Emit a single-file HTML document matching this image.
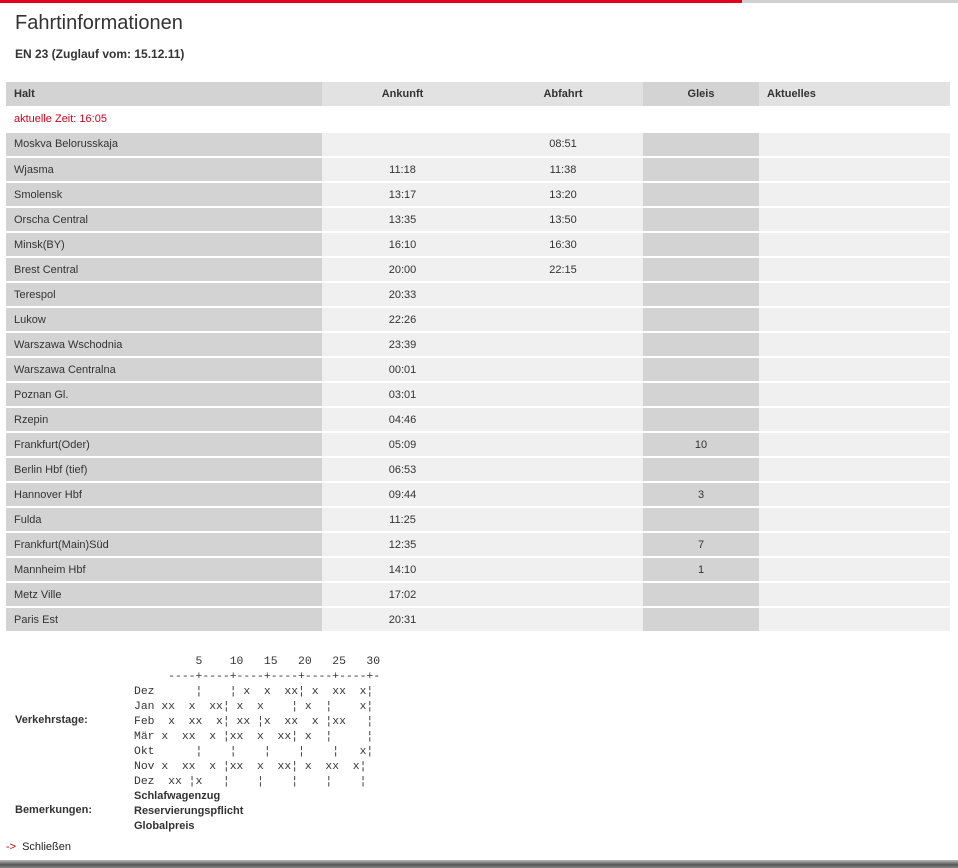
<!DOCTYPE html>
<html><head><meta charset="utf-8"><style>
*{margin:0;padding:0;box-sizing:border-box}
body{width:958px;height:868px;background:#fff;font-family:"Liberation Sans",Arial,sans-serif;color:#333;position:relative;overflow:hidden}
.topbar{position:absolute;left:0;top:0;width:958px;height:3px;background:#d0d0d0}
.topbar div{width:742px;height:3px;background:#e2001a}
h1{position:absolute;left:15px;top:12px;font-size:20px;font-weight:normal;color:#333}
h2{position:absolute;left:15px;top:47px;font-size:12px;font-weight:bold;color:#333}
table{position:absolute;left:6px;top:82px;border-collapse:collapse;font-size:11px;width:944px}
td,th{padding:0 8px;height:25px;border-bottom:2px solid #fff;white-space:nowrap}
th{height:24px;border:0;text-align:left;font-weight:bold}
.c1{width:316px;background:#d3d3d3}
.c2{width:161px;background:#f0f0f0;text-align:center}
.c3{width:160px;background:#f0f0f0;text-align:center}
.c4{width:116px;background:#d3d3d3;text-align:center}
.c5{width:191px;background:#f0f0f0}
th.c2,th.c3,th.c5{background:#e2e2e2}
th.c2,th.c3,th.c4{text-align:center}
tr.now td{background:#fff;color:#d0021b;height:26px;border-bottom:1px solid #fff}
.lbl{position:absolute;left:15px;font-size:11px;font-weight:bold;color:#333}
pre{position:absolute;left:134px;top:655px;font-family:"Liberation Mono","Courier New",monospace;font-size:11.4px;line-height:15px;color:#333}
.rem{position:absolute;left:134px;top:789px;font-size:11px;font-weight:bold;line-height:15px}
.close{position:absolute;left:6px;top:841px;font-size:11px;color:#222}
.close span{color:#c00;margin-right:6px}
.bot{position:absolute;left:0;top:860px;width:958px;height:8px;background:linear-gradient(#bbb,#555 60%,#888)}
</style></head><body>
<div class="topbar"><div></div></div>
<h1>Fahrtinformationen</h1>
<h2>EN 23 (Zuglauf vom: 15.12.11)</h2>
<table>
<tr><th class="c1">Halt</th><th class="c2">Ankunft</th><th class="c3">Abfahrt</th><th class="c4">Gleis</th><th class="c5">Aktuelles</th></tr>
<tr class="now"><td colspan="5">aktuelle Zeit: 16:05</td></tr>
<tr><td class="c1">Moskva Belorusskaja</td><td class="c2"></td><td class="c3">08:51</td><td class="c4"></td><td class="c5"></td></tr>
<tr><td class="c1">Wjasma</td><td class="c2">11:18</td><td class="c3">11:38</td><td class="c4"></td><td class="c5"></td></tr>
<tr><td class="c1">Smolensk</td><td class="c2">13:17</td><td class="c3">13:20</td><td class="c4"></td><td class="c5"></td></tr>
<tr><td class="c1">Orscha Central</td><td class="c2">13:35</td><td class="c3">13:50</td><td class="c4"></td><td class="c5"></td></tr>
<tr><td class="c1">Minsk(BY)</td><td class="c2">16:10</td><td class="c3">16:30</td><td class="c4"></td><td class="c5"></td></tr>
<tr><td class="c1">Brest Central</td><td class="c2">20:00</td><td class="c3">22:15</td><td class="c4"></td><td class="c5"></td></tr>
<tr><td class="c1">Terespol</td><td class="c2">20:33</td><td class="c3"></td><td class="c4"></td><td class="c5"></td></tr>
<tr><td class="c1">Lukow</td><td class="c2">22:26</td><td class="c3"></td><td class="c4"></td><td class="c5"></td></tr>
<tr><td class="c1">Warszawa Wschodnia</td><td class="c2">23:39</td><td class="c3"></td><td class="c4"></td><td class="c5"></td></tr>
<tr><td class="c1">Warszawa Centralna</td><td class="c2">00:01</td><td class="c3"></td><td class="c4"></td><td class="c5"></td></tr>
<tr><td class="c1">Poznan Gl.</td><td class="c2">03:01</td><td class="c3"></td><td class="c4"></td><td class="c5"></td></tr>
<tr><td class="c1">Rzepin</td><td class="c2">04:46</td><td class="c3"></td><td class="c4"></td><td class="c5"></td></tr>
<tr><td class="c1">Frankfurt(Oder)</td><td class="c2">05:09</td><td class="c3"></td><td class="c4">10</td><td class="c5"></td></tr>
<tr><td class="c1">Berlin Hbf (tief)</td><td class="c2">06:53</td><td class="c3"></td><td class="c4"></td><td class="c5"></td></tr>
<tr><td class="c1">Hannover Hbf</td><td class="c2">09:44</td><td class="c3"></td><td class="c4">3</td><td class="c5"></td></tr>
<tr><td class="c1">Fulda</td><td class="c2">11:25</td><td class="c3"></td><td class="c4"></td><td class="c5"></td></tr>
<tr><td class="c1">Frankfurt(Main)Süd</td><td class="c2">12:35</td><td class="c3"></td><td class="c4">7</td><td class="c5"></td></tr>
<tr><td class="c1">Mannheim Hbf</td><td class="c2">14:10</td><td class="c3"></td><td class="c4">1</td><td class="c5"></td></tr>
<tr><td class="c1">Metz Ville</td><td class="c2">17:02</td><td class="c3"></td><td class="c4"></td><td class="c5"></td></tr>
<tr><td class="c1">Paris Est</td><td class="c2">20:31</td><td class="c3"></td><td class="c4"></td><td class="c5"></td></tr>
</table>
<pre>         5    10   15   20   25   30
     ----+----+----+----+----+----+-
Dez      ¦    ¦ x  x  xx¦ x  xx  x¦
Jan xx  x  xx¦ x  x    ¦ x  ¦    x¦
Feb  x  xx  x¦ xx ¦x  xx  x ¦xx   ¦
Mär x  xx  x ¦xx  x  xx¦ x  ¦     ¦
Okt      ¦    ¦    ¦    ¦    ¦   x¦
Nov x  xx  x ¦xx  x  xx¦ x  xx  x¦
Dez  xx ¦x   ¦    ¦    ¦    ¦    ¦</pre>
<div class="lbl" style="top:714px">Verkehrstage:</div>
<div class="lbl" style="top:804px">Bemerkungen:</div>
<div class="rem">Schlafwagenzug<br>Reservierungspflicht<br>Globalpreis</div>
<div class="close"><span>-&gt;</span>Schließen</div>
<div class="bot"></div>
</body></html>
